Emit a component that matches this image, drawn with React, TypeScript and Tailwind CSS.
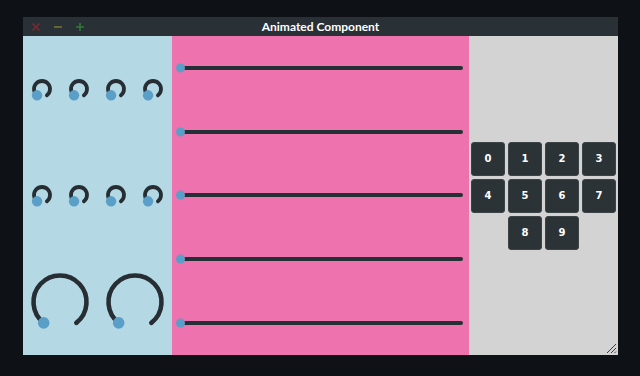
import React from 'react';

// knob drawn as a 280deg arc with a dot at the start (value 0)
const Knob: React.FC<{ size: number; r: number; stroke: number; dot: number }> = ({ size, r, stroke, dot }) => {
  const c = size / 2;
  const a0 = (128 * Math.PI) / 180;
  const a1 = (52 * Math.PI) / 180;
  const sx = c + r * Math.cos(a0);
  const sy = c + r * Math.sin(a0);
  const ex = c + r * Math.cos(a1);
  const ey = c + r * Math.sin(a1);
  return (
    <svg width={size} height={size} viewBox={`0 0 ${size} ${size}`}>
      <path
        d={`M ${sx} ${sy} A ${r} ${r} 0 1 1 ${ex} ${ey}`}
        fill="none"
        stroke="#262e33"
        strokeWidth={stroke}
        strokeLinecap="round"
      />
      <circle cx={sx} cy={sy} r={dot} fill="#5a9fc7" />
    </svg>
  );
};

const Slider: React.FC = () => (
  <div className="flex-1 flex items-center pl-[5px] pr-[6px]">
    <div className="relative w-full h-[4px] rounded-full bg-[#243035]">
      <div className="absolute left-[-1px] top-1/2 -translate-y-1/2 w-[9px] h-[9px] rounded-full bg-[#5a9fc7]"></div>
    </div>
  </div>
);

const Key: React.FC<{ n: number; className?: string }> = ({ n, className }) => (
  <button
    className={`w-[34px] h-[34px] flex items-center justify-center rounded-[3px] bg-[#2b3337] border border-[#3b4347] text-white text-[10px] font-bold ${className ?? ''}`}
  >
    {n}
  </button>
);

const App: React.FC = () => {
  return (
    <div className="w-[640px] h-[376px] bg-[#0e1116] pt-[17px] pl-[23px]" style={{ fontFamily: '"DejaVu Sans", sans-serif' }}>
      <div className="w-[595px] h-[338px] flex flex-col relative">
        {/* Title bar */}
        <div className="relative h-[19px] bg-[#2a3136] flex items-center justify-center">
          <div className="absolute left-[8px] top-0 h-full flex items-center gap-[12px]">
            <svg width="10" height="10" viewBox="0 0 10 10">
              <path d="M1.5 1.5 L8.5 8.5 M8.5 1.5 L1.5 8.5" stroke="#7c2a32" strokeWidth="1.6" />
            </svg>
            <svg width="10" height="10" viewBox="0 0 10 10">
              <path d="M1 5 L9 5" stroke="#6d6a2e" strokeWidth="1.8" />
            </svg>
            <svg width="10" height="10" viewBox="0 0 10 10">
              <path d="M1 5 L9 5 M5 1 L5 9" stroke="#2f7a36" strokeWidth="1.6" />
            </svg>
          </div>
          <span className="text-white text-[12px] font-bold" style={{ fontFamily: 'Lato, "DejaVu Sans", sans-serif' }}>
            Animated Component
          </span>
        </div>

        {/* Content */}
        <div className="flex h-[319px]">
          {/* Knobs */}
          <div className="w-[149px] bg-[#b5d9e4] flex flex-col">
            <div className="flex-1 grid grid-cols-4 items-center justify-items-center">
              {[0, 1, 2, 3].map((i) => (
                <Knob key={i} size={24} r={8} stroke={3.8} dot={5.2} />
              ))}
            </div>
            <div className="flex-1 grid grid-cols-4 items-center justify-items-center">
              {[0, 1, 2, 3].map((i) => (
                <Knob key={i} size={24} r={8} stroke={3.8} dot={5.2} />
              ))}
            </div>
            <div className="flex-1 grid grid-cols-2 items-center justify-items-center">
              <Knob size={66} r={26.5} stroke={4.6} dot={5.8} />
              <Knob size={66} r={26.5} stroke={4.6} dot={5.8} />
            </div>
          </div>

          {/* Sliders */}
          <div className="w-[297px] bg-[#ed72ad] flex flex-col">
            {[0, 1, 2, 3, 4].map((i) => (
              <Slider key={i} />
            ))}
          </div>

          {/* Numpad */}
          <div className="flex-1 bg-[#d3d3d3] flex items-center justify-center">
            <div className="grid grid-cols-4 gap-[3px]">
              {[0, 1, 2, 3, 4, 5, 6, 7].map((n) => (
                <Key key={n} n={n} />
              ))}
              <Key n={8} className="col-start-2" />
              <Key n={9} />
            </div>
          </div>
        </div>

        {/* resize grip */}
        <svg className="absolute right-[1px] bottom-[1px]" width="12" height="12" viewBox="0 0 12 12">
          <path d="M11 2 L2 11 M11 6 L6 11 M11 9.5 L9.5 11" stroke="#3a3f44" strokeWidth="1" />
        </svg>
      </div>
    </div>
  );
};

export default App;
